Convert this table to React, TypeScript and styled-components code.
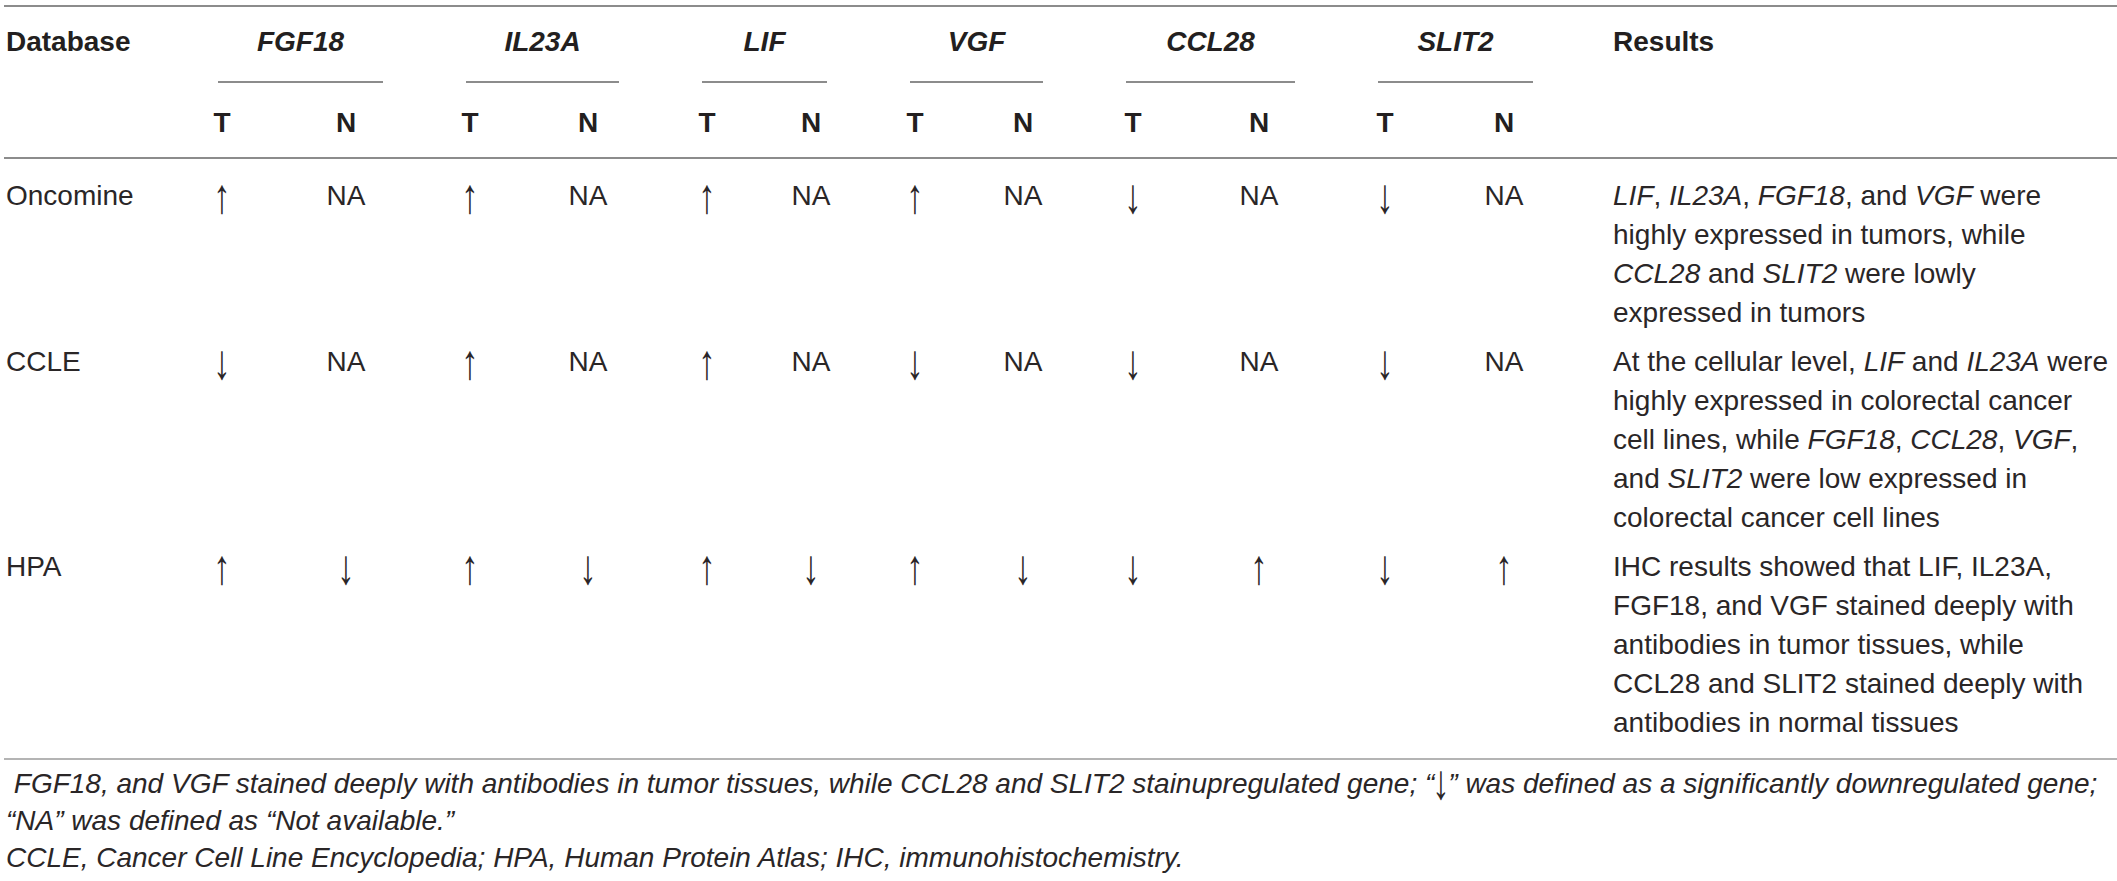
import React from "react";
import styled, { createGlobalStyle } from "styled-components";

const GlobalStyle = createGlobalStyle`
  html, body {
    margin: 0;
    padding: 0;
    background: #ffffff;
  }
  body {
    font-family: "Liberation Sans", Arial, Helvetica, sans-serif;
    color: #231f20;
  }
`;

const Page = styled.div`
  padding: 5px 0 0 4px;
  width: 2113px;
`;

const Table = styled.table`
  width: 2113px;
  table-layout: fixed;
  border-collapse: separate;
  border-spacing: 0;
  border-top: 2px solid #8c8c8c;
  border-bottom: 2px solid #b4b4b4;
  font-size: 28px;
`;

const HeadCell = styled.th<{ $align?: "left" | "center"; $padLeft?: number }>`
  padding: 18px 0 0 ${(p) => p.$padLeft ?? 0}px;
  line-height: 34px;
  font-weight: 700;
  text-align: ${(p) => p.$align ?? "left"};
  vertical-align: top;
`;

const GeneHead = styled.th`
  padding: 18px 25px 0 58px;
  line-height: 34px;
  vertical-align: top;
`;

const GeneName = styled.div`
  font-weight: 700;
  font-style: italic;
  text-align: center;
  padding-bottom: 22px;
  border-bottom: 2px solid #8c8c8c;
`;

const SubCell = styled.th`
  padding: 23px 0 17px;
  line-height: 34px;
  font-weight: 700;
  text-align: center;
  border-bottom: 2px solid #8c8c8c;
`;

const Row = styled.tr`
  &:first-child > td {
    padding-top: 17px;
  }
  &:last-child > td {
    padding-bottom: 16px;
  }
`;

const Cell = styled.td<{ $align?: "left" | "center"; $padLeft?: number }>`
  padding: 10px 0 0 ${(p) => p.$padLeft ?? 0}px;
  line-height: 39px;
  font-weight: 400;
  color: #2a2627;
  text-align: ${(p) => p.$align ?? "center"};
  vertical-align: top;
`;

const Arrow = styled.span<{ $shift?: number }>`
  display: inline-block;
  font-style: normal;
  transform: translateY(${(p) => p.$shift ?? 1}px) scale(1.25, 1.75);
`;

const Line = styled.span`
  display: block;
  white-space: nowrap;
`;

const Footnote = styled.div`
  padding: 5px 0 0 2px;
  font-size: 28px;
  font-style: italic;
  line-height: 37px;
  color: #2a2627;
`;

const NoteLine = styled.span`
  display: block;
  white-space: pre;
`;

const widths = [156, 124, 124, 124, 112, 126, 82, 126, 90, 130, 122, 130, 108, 559];
const genes = ["FGF18", "IL23A", "LIF", "VGF", "CCL28", "SLIT2"];

type DataRow = {
  db: string;
  values: string[];
  result: React.ReactNode[];
};

const rows: DataRow[] = [
  {
    db: "Oncomine",
    values: ["↑", "NA", "↑", "NA", "↑", "NA", "↑", "NA", "↓", "NA", "↓", "NA"],
    result: [
      <>
        <i>LIF</i>, <i>IL23A</i>, <i>FGF18</i>, and <i>VGF</i> were
      </>,
      <>highly expressed in tumors, while</>,
      <>
        <i>CCL28</i> and <i>SLIT2</i> were lowly
      </>,
      <>expressed in tumors</>,
    ],
  },
  {
    db: "CCLE",
    values: ["↓", "NA", "↑", "NA", "↑", "NA", "↓", "NA", "↓", "NA", "↓", "NA"],
    result: [
      <>
        At the cellular level, <i>LIF</i> and <i>IL23A</i> were
      </>,
      <>highly expressed in colorectal cancer</>,
      <>
        cell lines, while <i>FGF18</i>, <i>CCL28</i>, <i>VGF</i>,
      </>,
      <>
        and <i>SLIT2</i> were low expressed in
      </>,
      <>colorectal cancer cell lines</>,
    ],
  },
  {
    db: "HPA",
    values: ["↑", "↓", "↑", "↓", "↑", "↓", "↑", "↓", "↓", "↑", "↓", "↑"],
    result: [
      <>IHC results showed that LIF, IL23A,</>,
      <>FGF18, and VGF stained deeply with</>,
      <>antibodies in tumor tissues, while</>,
      <>CCL28 and SLIT2 stained deeply with</>,
      <>antibodies in normal tissues</>,
    ],
  },
];

const renderValue = (v: string) => (v === "NA" ? v : <Arrow>{v}</Arrow>);

export default function App() {
  return (
    <>
      <GlobalStyle />
      <Page>
        <Table>
          <colgroup>
            {widths.map((w, i) => (
              <col key={i} style={{ width: w }} />
            ))}
          </colgroup>
          <thead>
            <tr>
              <HeadCell $padLeft={2}>Database</HeadCell>
              {genes.map((g) => (
                <GeneHead key={g} colSpan={2}>
                  <GeneName>{g}</GeneName>
                </GeneHead>
              ))}
              <HeadCell $padLeft={55}>Results</HeadCell>
            </tr>
            <tr>
              <SubCell />
              {genes.map((g) => (
                <React.Fragment key={g}>
                  <SubCell>T</SubCell>
                  <SubCell>N</SubCell>
                </React.Fragment>
              ))}
              <SubCell />
            </tr>
          </thead>
          <tbody>
            {rows.map((r) => (
              <Row key={r.db}>
                <Cell $align="left" $padLeft={2}>
                  {r.db}
                </Cell>
                {r.values.map((v, i) => (
                  <Cell key={i}>{renderValue(v)}</Cell>
                ))}
                <Cell $align="left" $padLeft={55}>
                  {r.result.map((l, i) => (
                    <Line key={i}>{l}</Line>
                  ))}
                </Cell>
              </Row>
            ))}
          </tbody>
        </Table>
        <Footnote>
          <NoteLine>
            {" FGF18, and VGF stained deeply with antibodies in tumor tissues, while CCL28 and SLIT2 stainupregulated gene; “"}
            <Arrow $shift={-1}>↓</Arrow>
            {"” was defined as a significantly downregulated gene;"}
          </NoteLine>
          <NoteLine>“NA” was defined as “Not available.”</NoteLine>
          <NoteLine>CCLE, Cancer Cell Line Encyclopedia; HPA, Human Protein Atlas; IHC, immunohistochemistry.</NoteLine>
        </Footnote>
      </Page>
    </>
  );
}
